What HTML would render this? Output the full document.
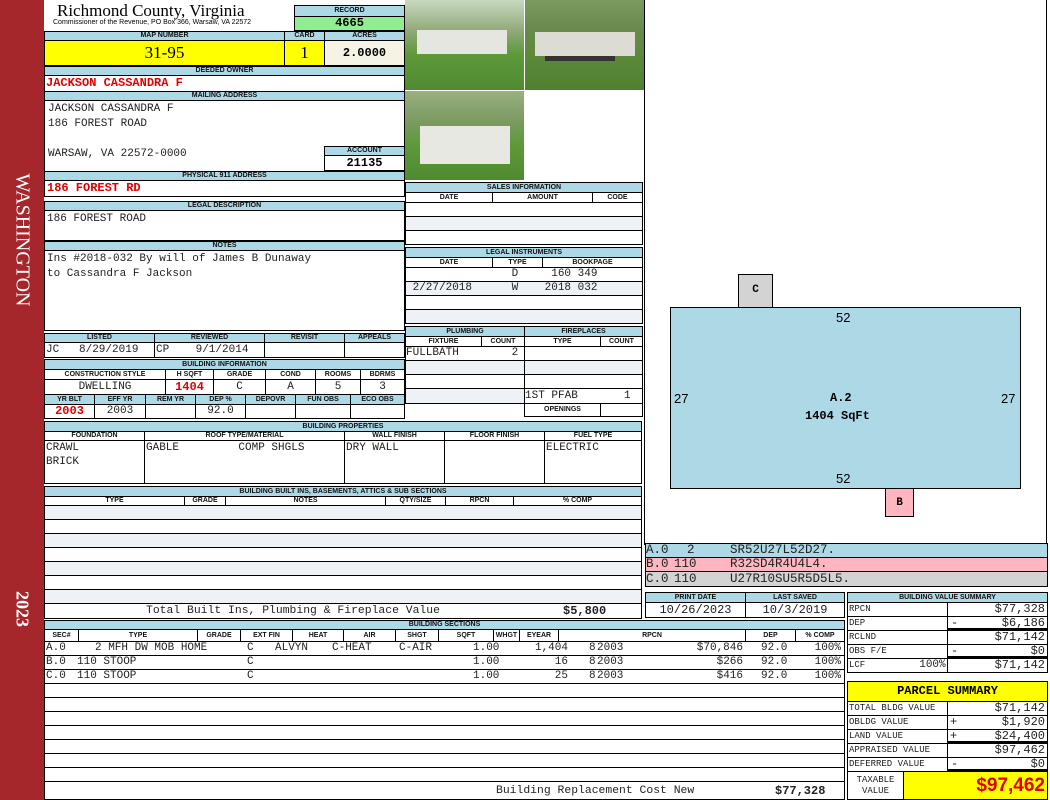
<!DOCTYPE html>
<html><head><meta charset="utf-8"><style>
*{margin:0;padding:0}
body{width:1050px;height:800px;position:relative;background:#fff;overflow:hidden;font-family:"Liberation Sans",sans-serif}
.b{position:absolute;box-sizing:border-box;border:1px solid #000;overflow:hidden;white-space:nowrap}
.h{background:#add8e6;font-size:7px;font-weight:bold;text-align:center;color:#111}
.m{font-family:"Liberation Mono",monospace;font-size:11px;color:#222}
.r{color:#e00000;font-weight:bold;font-family:"Liberation Mono",monospace;font-size:12px}
.a{background:#eef1f6}
.n{position:absolute;white-space:nowrap}
.s{position:absolute;top:0;white-space:nowrap}
.t{position:absolute;top:0;white-space:nowrap;text-align:right}
</style></head><body>
<div class="n" style="left:0;top:0;width:44px;height:800px;background:#a5262b"></div>
<div class="n" style="left:22px;top:240px;transform:translate(-50%,-50%) rotate(90deg);color:#fff;font:20px 'Liberation Serif',serif">WASHINGTON</div>
<div class="n" style="left:22px;top:609px;transform:translate(-50%,-50%) rotate(90deg);color:#fff;font:bold 18px 'Liberation Serif',serif">2023</div>

<div class="n" style="left:57px;top:1px;font:17px 'Liberation Serif',serif">Richmond County, Virginia</div>
<div class="n" style="left:53px;top:19px;font:7px 'Liberation Sans'">Commissioner of the Revenue, PO Box 366, Warsaw, VA 22572</div>
<div class="b h" style="left:294px;top:5px;width:111px;height:12px;line-height:10px">RECORD</div>
<div class="b" style="left:294px;top:16px;width:111px;height:15px;background:#90ee90;text-align:center;font:bold 12px 'Liberation Mono';line-height:13px">4665</div>

<div class="b h" style="left:44px;top:31px;width:241px;height:10px;line-height:8px">MAP NUMBER</div>
<div class="b h" style="left:284px;top:31px;width:41px;height:10px;line-height:8px">CARD</div>
<div class="b h" style="left:324px;top:31px;width:81px;height:10px;line-height:8px">ACRES</div>
<div class="b" style="left:44px;top:40px;width:241px;height:26px;background:#ff0;text-align:center;font:17px 'Liberation Serif';line-height:24px">31-95</div>
<div class="b" style="left:284px;top:40px;width:41px;height:26px;background:#ff0;text-align:center;font:17px 'Liberation Serif';line-height:24px">1</div>
<div class="b" style="left:324px;top:40px;width:81px;height:26px;background:#f4f3e4;text-align:center;font:bold 12px 'Liberation Mono';line-height:24px">2.0000</div>

<div class="b h" style="left:44px;top:66px;width:361px;height:10px;line-height:8px">DEEDED OWNER</div>
<div class="b r" style="left:44px;top:75px;width:361px;height:17px;line-height:15px;padding-left:1px">JACKSON CASSANDRA F</div>
<div class="b h" style="left:44px;top:91px;width:361px;height:10px;line-height:8px">MAILING ADDRESS</div>
<div class="b m" style="left:44px;top:100px;width:361px;height:72px;padding:1px 3px;line-height:15px;white-space:pre">JACKSON CASSANDRA F
186 FOREST ROAD

WARSAW, VA 22572-0000</div>
<div class="b h" style="left:324px;top:146px;width:81px;height:10px;line-height:8px">ACCOUNT</div>
<div class="b" style="left:324px;top:155px;width:81px;height:16px;text-align:center;font:bold 12px 'Liberation Mono';line-height:14px">21135</div>
<div class="b h" style="left:44px;top:171px;width:361px;height:10px;line-height:8px">PHYSICAL 911 ADDRESS</div>
<div class="b r" style="left:44px;top:180px;width:361px;height:17px;line-height:15px;padding-left:2px">186 FOREST RD</div>
<div class="b h" style="left:44px;top:201px;width:361px;height:10px;line-height:8px">LEGAL DESCRIPTION</div>
<div class="b m" style="left:44px;top:210px;width:361px;height:31px;padding:1px 2px;line-height:15px">186 FOREST ROAD</div>
<div class="b h" style="left:44px;top:241px;width:361px;height:10px;line-height:8px">NOTES</div>
<div class="b m" style="left:44px;top:250px;width:361px;height:81px;padding:1px 2px;line-height:15px;white-space:pre">Ins #2018-032 By will of James B Dunaway
to Cassandra F Jackson</div>

<div class="b h" style="left:44px;top:333px;width:111px;height:10px;line-height:8px">LISTED</div>
<div class="b h" style="left:154px;top:333px;width:111px;height:10px;line-height:8px">REVIEWED</div>
<div class="b h" style="left:264px;top:333px;width:81px;height:10px;line-height:8px">REVISIT</div>
<div class="b h" style="left:344px;top:333px;width:61px;height:10px;line-height:8px">APPEALS</div>
<div class="b m" style="left:44px;top:342px;width:111px;height:16px;line-height:14px;padding-left:1px;white-space:pre">JC   8/29/2019</div>
<div class="b m" style="left:154px;top:342px;width:111px;height:16px;line-height:14px;padding-left:1px;white-space:pre">CP    9/1/2014</div>
<div class="b" style="left:264px;top:342px;width:81px;height:16px"></div>
<div class="b" style="left:344px;top:342px;width:61px;height:16px"></div>

<div class="b h" style="left:44px;top:359px;width:361px;height:11px;line-height:9px">BUILDING INFORMATION</div>
<div class="b h" style="left:44px;top:369px;width:122px;height:11px;line-height:9px;background:#fff">CONSTRUCTION STYLE</div>
<div class="b h" style="left:165px;top:369px;width:49px;height:11px;line-height:9px;background:#fff">H SQFT</div>
<div class="b h" style="left:213px;top:369px;width:53px;height:11px;line-height:9px;background:#fff">GRADE</div>
<div class="b h" style="left:265px;top:369px;width:51px;height:11px;line-height:9px;background:#fff">COND</div>
<div class="b h" style="left:315px;top:369px;width:46px;height:11px;line-height:9px;background:#fff">ROOMS</div>
<div class="b h" style="left:360px;top:369px;width:45px;height:11px;line-height:9px;background:#fff">BDRMS</div>
<div class="b m" style="left:44px;top:379px;width:122px;height:16px;line-height:14px;text-align:center">DWELLING</div>
<div class="b r" style="left:165px;top:379px;width:49px;height:16px;line-height:14px;text-align:center">1404</div>
<div class="b m" style="left:213px;top:379px;width:53px;height:16px;line-height:14px;text-align:center">C</div>
<div class="b m" style="left:265px;top:379px;width:51px;height:16px;line-height:14px;text-align:center">A</div>
<div class="b m" style="left:315px;top:379px;width:46px;height:16px;line-height:14px;text-align:center">5</div>
<div class="b m" style="left:360px;top:379px;width:45px;height:16px;line-height:14px;text-align:center">3</div>
<div class="b h" style="left:44px;top:394px;width:51px;height:11px;line-height:9px">YR BLT</div>
<div class="b h" style="left:94px;top:394px;width:52px;height:11px;line-height:9px">EFF YR</div>
<div class="b h" style="left:145px;top:394px;width:51px;height:11px;line-height:9px">REM YR</div>
<div class="b h" style="left:195px;top:394px;width:51px;height:11px;line-height:9px">DEP %</div>
<div class="b h" style="left:245px;top:394px;width:51px;height:11px;line-height:9px">DEPOVR</div>
<div class="b h" style="left:295px;top:394px;width:56px;height:11px;line-height:9px">FUN OBS</div>
<div class="b h" style="left:350px;top:394px;width:55px;height:11px;line-height:9px">ECO OBS</div>
<div class="b r" style="left:44px;top:404px;width:51px;height:15px;line-height:13px;text-align:center">2003</div>
<div class="b m" style="left:94px;top:404px;width:52px;height:15px;line-height:13px;text-align:center">2003</div>
<div class="b" style="left:145px;top:404px;width:51px;height:15px"></div>
<div class="b m" style="left:195px;top:404px;width:51px;height:15px;line-height:13px;text-align:center">92.0</div>
<div class="b" style="left:245px;top:404px;width:51px;height:15px"></div>
<div class="b" style="left:295px;top:404px;width:56px;height:15px"></div>
<div class="b" style="left:350px;top:404px;width:55px;height:15px"></div>

<!-- building properties -->
<div class="b h" style="left:44px;top:421px;width:598px;height:11px;line-height:9px">BUILDING PROPERTIES</div>
<div class="b h" style="left:44px;top:431px;width:101px;height:10px;line-height:8px;background:#fff">FOUNDATION</div>
<div class="b h" style="left:144px;top:431px;width:201px;height:10px;line-height:8px;background:#fff">ROOF TYPE/MATERIAL</div>
<div class="b h" style="left:344px;top:431px;width:101px;height:10px;line-height:8px;background:#fff">WALL FINISH</div>
<div class="b h" style="left:444px;top:431px;width:101px;height:10px;line-height:8px;background:#fff">FLOOR FINISH</div>
<div class="b h" style="left:544px;top:431px;width:98px;height:10px;line-height:8px;background:#fff">FUEL TYPE</div>
<div class="b m" style="left:44px;top:440px;width:101px;height:44px;line-height:14px;padding-left:1px;white-space:pre">CRAWL
BRICK</div>
<div class="b m" style="left:144px;top:440px;width:201px;height:44px;line-height:14px;padding-left:1px;white-space:pre">GABLE         COMP SHGLS</div>
<div class="b m" style="left:344px;top:440px;width:101px;height:44px;line-height:14px;padding-left:1px">DRY WALL</div>
<div class="b" style="left:444px;top:440px;width:101px;height:44px"></div>
<div class="b m" style="left:544px;top:440px;width:98px;height:44px;line-height:14px;padding-left:1px">ELECTRIC</div>

<!-- built ins -->
<div class="b h" style="left:44px;top:486px;width:598px;height:11px;line-height:9px">BUILDING BUILT INS, BASEMENTS, ATTICS &amp; SUB SECTIONS</div>
<div class="b h" style="left:44px;top:496px;width:141px;height:10px;line-height:8px;background:#fff">TYPE</div>
<div class="b h" style="left:184px;top:496px;width:42px;height:10px;line-height:8px;background:#fff">GRADE</div>
<div class="b h" style="left:225px;top:496px;width:161px;height:10px;line-height:8px;background:#fff">NOTES</div>
<div class="b h" style="left:385px;top:496px;width:61px;height:10px;line-height:8px;background:#fff">QTY/SIZE</div>
<div class="b h" style="left:445px;top:496px;width:69px;height:10px;line-height:8px;background:#fff">RPCN</div>
<div class="b h" style="left:513px;top:496px;width:129px;height:10px;line-height:8px;background:#fff">% COMP</div>
<div class="b a" style="left:44px;top:505px;width:598px;height:15px"></div>
<div class="b" style="left:44px;top:519px;width:598px;height:15px"></div>
<div class="b a" style="left:44px;top:533px;width:598px;height:15px"></div>
<div class="b" style="left:44px;top:547px;width:598px;height:15px"></div>
<div class="b a" style="left:44px;top:561px;width:598px;height:15px"></div>
<div class="b" style="left:44px;top:575px;width:598px;height:15px"></div>
<div class="b a" style="left:44px;top:589px;width:598px;height:15px"></div>
<div class="b m" style="left:44px;top:603px;width:598px;height:16px;line-height:15px;font-size:11.4px">
<span class="s" style="left:101px">Total Built Ins, Plumbing &amp; Fireplace Value</span>
<span class="s" style="left:518px;font-weight:bold;font-size:12px">$5,800</span></div>

<!-- building sections -->
<div class="b h" style="left:44px;top:620px;width:801px;height:10px;line-height:8px">BUILDING SECTIONS</div>
<div class="b h" style="left:44px;top:629px;width:35px;height:13px;line-height:11px;background:#fff">SEC#</div>
<div class="b h" style="left:78px;top:629px;width:120px;height:13px;line-height:11px;background:#fff">TYPE</div>
<div class="b h" style="left:197px;top:629px;width:44px;height:13px;line-height:11px;background:#fff">GRADE</div>
<div class="b h" style="left:240px;top:629px;width:53px;height:13px;line-height:11px;background:#fff">EXT FIN</div>
<div class="b h" style="left:292px;top:629px;width:52px;height:13px;line-height:11px;background:#fff">HEAT</div>
<div class="b h" style="left:343px;top:629px;width:53px;height:13px;line-height:11px;background:#fff">AIR</div>
<div class="b h" style="left:395px;top:629px;width:44px;height:13px;line-height:11px;background:#fff">SHGT</div>
<div class="b h" style="left:438px;top:629px;width:56px;height:13px;line-height:11px;background:#fff">SQFT</div>
<div class="b h" style="left:493px;top:629px;width:27px;height:13px;line-height:11px;background:#fff">WHGT</div>
<div class="b h" style="left:519px;top:629px;width:40px;height:13px;line-height:11px;background:#fff">EYEAR</div>
<div class="b h" style="left:558px;top:629px;width:188px;height:13px;line-height:11px;background:#fff">RPCN</div>
<div class="b h" style="left:745px;top:629px;width:51px;height:13px;line-height:11px;background:#fff">DEP</div>
<div class="b h" style="left:795px;top:629px;width:50px;height:13px;line-height:11px;background:#fff">% COMP</div>

<div class="b m" style="left:44px;top:641px;width:801px;height:15px;line-height:13px">
<span class="s" style="left:1px">A.0</span><span class="s" style="left:50px">2 MFH DW MOB HOME</span><span class="s" style="left:202px">C</span><span class="s" style="left:230px">ALVYN</span><span class="s" style="left:287px">C-HEAT</span><span class="s" style="left:354px">C-AIR</span><span class="s" style="left:428px">1.00</span><span class="t" style="left:460px;width:63px">1,404</span><span class="s" style="left:544px">8</span><span class="s" style="left:552px">2003</span><span class="t" style="left:620px;width:78px">$70,846</span><span class="s" style="left:716px">92.0</span><span class="t" style="left:740px;width:56px">100%</span></div>
<div class="b m" style="left:44px;top:655px;width:801px;height:15px;line-height:13px">
<span class="s" style="left:1px">B.0</span><span class="s" style="left:32px">110 STOOP</span><span class="s" style="left:202px">C</span><span class="s" style="left:428px">1.00</span><span class="t" style="left:460px;width:63px">16</span><span class="s" style="left:544px">8</span><span class="s" style="left:552px">2003</span><span class="t" style="left:620px;width:78px">$266</span><span class="s" style="left:716px">92.0</span><span class="t" style="left:740px;width:56px">100%</span></div>
<div class="b m" style="left:44px;top:669px;width:801px;height:15px;line-height:13px">
<span class="s" style="left:1px">C.0</span><span class="s" style="left:32px">110 STOOP</span><span class="s" style="left:202px">C</span><span class="s" style="left:428px">1.00</span><span class="t" style="left:460px;width:63px">25</span><span class="s" style="left:544px">8</span><span class="s" style="left:552px">2003</span><span class="t" style="left:620px;width:78px">$416</span><span class="s" style="left:716px">92.0</span><span class="t" style="left:740px;width:56px">100%</span></div>
<div class="b" style="left:44px;top:683px;width:801px;height:15px"></div>
<div class="b" style="left:44px;top:697px;width:801px;height:15px"></div>
<div class="b" style="left:44px;top:711px;width:801px;height:15px"></div>
<div class="b" style="left:44px;top:725px;width:801px;height:15px"></div>
<div class="b" style="left:44px;top:739px;width:801px;height:15px"></div>
<div class="b" style="left:44px;top:753px;width:801px;height:15px"></div>
<div class="b" style="left:44px;top:767px;width:801px;height:15px"></div>
<div class="b m" style="left:44px;top:781px;width:801px;height:19px;line-height:18px;font-size:11.4px">
<span class="s" style="left:451px">Building Replacement Cost New</span>
<span class="s" style="left:730px;font-weight:bold;font-size:12px">$77,328</span></div>

<!-- photos -->
<div class="n" style="left:405px;top:0;width:119px;height:90px;background:linear-gradient(#c9d9c0 0,#8fa878 35%,#5e9a3a 60%,#4f8a30 100%)"><div class="n" style="left:12px;top:30px;width:90px;height:24px;background:#e6e6e0"></div></div>
<div class="n" style="left:525px;top:0;width:119px;height:90px;background:linear-gradient(#7a9a60 0,#6a8a50 30%,#5d8a3a 60%,#4f8030 100%)"><div class="n" style="left:10px;top:32px;width:100px;height:24px;background:#dcdcd4"></div><div class="n" style="left:20px;top:56px;width:70px;height:5px;background:#333"></div></div>
<div class="n" style="left:405px;top:91px;width:119px;height:89px;background:linear-gradient(#9ab080 0,#7a9a60 35%,#5e9a3a 60%,#4f8a30 100%)"><div class="n" style="left:15px;top:35px;width:90px;height:38px;background:#e8e8e2"></div></div>

<!-- sales -->
<div class="b h" style="left:405px;top:182px;width:238px;height:11px;line-height:9px">SALES INFORMATION</div>
<div class="b h" style="left:405px;top:192px;width:88px;height:11px;line-height:9px;background:#fff">DATE</div>
<div class="b h" style="left:492px;top:192px;width:101px;height:11px;line-height:9px;background:#fff">AMOUNT</div>
<div class="b h" style="left:592px;top:192px;width:51px;height:11px;line-height:9px;background:#fff">CODE</div>
<div class="b" style="left:405px;top:202px;width:238px;height:15px"></div>
<div class="b a" style="left:405px;top:216px;width:238px;height:15px"></div>
<div class="b" style="left:405px;top:230px;width:238px;height:15px"></div>

<div class="b h" style="left:405px;top:247px;width:238px;height:11px;line-height:9px">LEGAL INSTRUMENTS</div>
<div class="b h" style="left:405px;top:257px;width:88px;height:11px;line-height:9px;background:#fff">DATE</div>
<div class="b h" style="left:492px;top:257px;width:51px;height:11px;line-height:9px;background:#fff">TYPE</div>
<div class="b h" style="left:542px;top:257px;width:101px;height:11px;line-height:9px;background:#fff">BOOKPAGE</div>
<div class="b m" style="left:405px;top:267px;width:238px;height:15px;line-height:13px;white-space:pre">                D     160 349</div>
<div class="b m a" style="left:405px;top:281px;width:238px;height:15px;line-height:13px;white-space:pre"> 2/27/2018      W    2018 032</div>
<div class="b" style="left:405px;top:295px;width:238px;height:15px"></div>
<div class="b a" style="left:405px;top:309px;width:238px;height:15px"></div>

<div class="b h" style="left:405px;top:326px;width:120px;height:11px;line-height:9px">PLUMBING</div>
<div class="b h" style="left:524px;top:326px;width:119px;height:11px;line-height:9px">FIREPLACES</div>
<div class="b h" style="left:405px;top:336px;width:77px;height:11px;line-height:9px;background:#fff">FIXTURE</div>
<div class="b h" style="left:481px;top:336px;width:44px;height:11px;line-height:9px;background:#fff">COUNT</div>
<div class="b h" style="left:524px;top:336px;width:77px;height:11px;line-height:9px;background:#fff">TYPE</div>
<div class="b h" style="left:600px;top:336px;width:43px;height:11px;line-height:9px;background:#fff">COUNT</div>
<div class="b m" style="left:405px;top:346px;width:120px;height:15px;line-height:13px;white-space:pre">FULLBATH        2</div>
<div class="b a" style="left:405px;top:360px;width:120px;height:15px"></div>
<div class="b" style="left:405px;top:374px;width:120px;height:15px"></div>
<div class="b a" style="left:405px;top:388px;width:120px;height:16px"></div>
<div class="b" style="left:524px;top:346px;width:119px;height:15px"></div>
<div class="b a" style="left:524px;top:360px;width:119px;height:15px"></div>
<div class="b" style="left:524px;top:374px;width:119px;height:15px"></div>
<div class="b m" style="left:524px;top:388px;width:119px;height:16px;line-height:14px;white-space:pre">1ST PFAB       1</div>
<div class="b h" style="left:524px;top:403px;width:77px;height:14px;line-height:12px;background:#fff">OPENINGS</div>
<div class="b" style="left:600px;top:403px;width:43px;height:14px"></div>

<!-- sketch area -->
<div class="n" style="left:644px;top:0;width:1px;height:545px;background:#000"></div>
<div class="n" style="left:1046px;top:0;width:1px;height:545px;background:#000"></div>
<div class="b" style="left:738px;top:274px;width:35px;height:34px;background:#d3d3d3;text-align:center;font:bold 11px 'Liberation Mono';line-height:30px">C</div>
<div class="b" style="left:885px;top:488px;width:29px;height:29px;background:#ffb6c1;text-align:center;font:bold 11px 'Liberation Mono';line-height:28px">B</div>
<div class="b" style="left:670px;top:307px;width:351px;height:182px;background:#add8e6"></div>
<div class="n" style="left:836px;top:310px;font:13px 'Liberation Sans'">52</div>
<div class="n" style="left:836px;top:471px;font:13px 'Liberation Sans'">52</div>
<div class="n" style="left:674px;top:391px;font:13px 'Liberation Sans'">27</div>
<div class="n" style="left:1001px;top:391px;font:13px 'Liberation Sans'">27</div>
<div class="n" style="left:830px;top:391px;font:bold 12px 'Liberation Mono'">A.2</div>
<div class="n" style="left:805px;top:409px;font:bold 12px 'Liberation Mono'">1404 SqFt</div>

<div class="b m" style="left:645px;top:543px;width:403px;height:15px;line-height:13px;background:#add8e6;font-size:12.5px"><span class="s" style="left:0">A.0</span><span class="s" style="left:41px">2</span><span class="s" style="left:84px">SR52U27L52D27.</span></div>
<div class="b m" style="left:645px;top:557px;width:403px;height:15px;line-height:13px;background:#ffb6c1;font-size:12.5px"><span class="s" style="left:0">B.0</span><span class="s" style="left:28px">110</span><span class="s" style="left:84px">R32SD4R4U4L4.</span></div>
<div class="b m" style="left:645px;top:571px;width:403px;height:16px;line-height:14px;background:#d3d3d3;font-size:12.5px"><span class="s" style="left:0">C.0</span><span class="s" style="left:28px">110</span><span class="s" style="left:84px">U27R10SU5R5D5L5.</span></div>

<div class="b h" style="left:645px;top:592px;width:101px;height:11px;line-height:9px">PRINT DATE</div>
<div class="b h" style="left:745px;top:592px;width:100px;height:11px;line-height:9px">LAST SAVED</div>
<div class="b m" style="left:645px;top:602px;width:101px;height:16px;line-height:14px;text-align:center;font-size:12px">10/26/2023</div>
<div class="b m" style="left:745px;top:602px;width:100px;height:16px;line-height:14px;text-align:center;font-size:12px">10/3/2019</div>

<div class="b h" style="left:847px;top:592px;width:201px;height:11px;line-height:9px">BUILDING VALUE SUMMARY</div>
<div class="b m" style="left:847px;top:602px;width:101px;height:15px;line-height:13px;font-size:9px;padding-left:1px">RPCN</div>
<div class="b m" style="left:947px;top:602px;width:101px;height:15px;line-height:13px;text-align:right;padding-right:2px;font-size:12px">$77,328</div>
<div class="b m" style="left:847px;top:616px;width:101px;height:15px;line-height:13px;font-size:9px;padding-left:1px">DEP</div>
<div class="b m" style="left:947px;top:616px;width:101px;height:15px;line-height:13px;text-align:right;padding-right:2px;font-size:12px;border-bottom:3px solid #000"><span style="float:left;padding-left:3px">-</span>$6,186</div>
<div class="b m" style="left:847px;top:630px;width:101px;height:15px;line-height:13px;font-size:9px;padding-left:1px">RCLND</div>
<div class="b m" style="left:947px;top:630px;width:101px;height:15px;line-height:13px;text-align:right;padding-right:2px;font-size:12px">$71,142</div>
<div class="b m" style="left:847px;top:644px;width:101px;height:15px;line-height:13px;font-size:9px;padding-left:1px">OBS F/E</div>
<div class="b m" style="left:947px;top:644px;width:101px;height:15px;line-height:13px;text-align:right;padding-right:2px;font-size:12px;border-bottom:3px solid #000"><span style="float:left;padding-left:3px">-</span>$0</div>
<div class="b m" style="left:847px;top:658px;width:101px;height:15px;line-height:13px;font-size:9px;padding-left:1px;white-space:pre">LCF          <span style="font-size:11px">100%</span></div>
<div class="b m" style="left:947px;top:658px;width:101px;height:15px;line-height:13px;text-align:right;padding-right:2px;font-size:12px">$71,142</div>

<div class="b" style="left:847px;top:681px;width:201px;height:21px;background:#ff0;text-align:center;font:bold 12px 'Liberation Mono';line-height:19px">PARCEL SUMMARY</div>
<div class="b m" style="left:847px;top:701px;width:101px;height:15px;line-height:13px;font-size:9px;padding-left:1px">TOTAL BLDG VALUE</div>
<div class="b m" style="left:947px;top:701px;width:101px;height:15px;line-height:13px;text-align:right;padding-right:2px;font-size:12px">$71,142</div>
<div class="b m" style="left:847px;top:715px;width:101px;height:15px;line-height:13px;font-size:9px;padding-left:1px">OBLDG VALUE</div>
<div class="b m" style="left:947px;top:715px;width:101px;height:15px;line-height:13px;text-align:right;padding-right:2px;font-size:12px"><span style="float:left;padding-left:2px">+</span>$1,920</div>
<div class="b m" style="left:847px;top:729px;width:101px;height:15px;line-height:13px;font-size:9px;padding-left:1px">LAND VALUE</div>
<div class="b m" style="left:947px;top:729px;width:101px;height:15px;line-height:13px;text-align:right;padding-right:2px;font-size:12px;border-bottom:3px solid #000"><span style="float:left;padding-left:2px">+</span>$24,400</div>
<div class="b m" style="left:847px;top:743px;width:101px;height:15px;line-height:13px;font-size:9px;padding-left:1px">APPRAISED VALUE</div>
<div class="b m" style="left:947px;top:743px;width:101px;height:15px;line-height:13px;text-align:right;padding-right:2px;font-size:12px">$97,462</div>
<div class="b m" style="left:847px;top:757px;width:101px;height:15px;line-height:13px;font-size:9px;padding-left:1px">DEFERRED VALUE</div>
<div class="b m" style="left:947px;top:757px;width:101px;height:15px;line-height:13px;text-align:right;padding-right:2px;font-size:12px;border-bottom:3px solid #000"><span style="float:left;padding-left:3px">-</span>$0</div>
<div class="b m" style="left:847px;top:771px;width:57px;height:29px;font-size:9px;line-height:11px;text-align:center;padding-top:3px;white-space:pre">TAXABLE
VALUE</div>
<div class="b" style="left:903px;top:771px;width:145px;height:29px;background:#ff0;text-align:right;padding-right:2px;color:#e00000;font:bold 19px 'Liberation Sans';line-height:27px">$97,462</div>
</body></html>
